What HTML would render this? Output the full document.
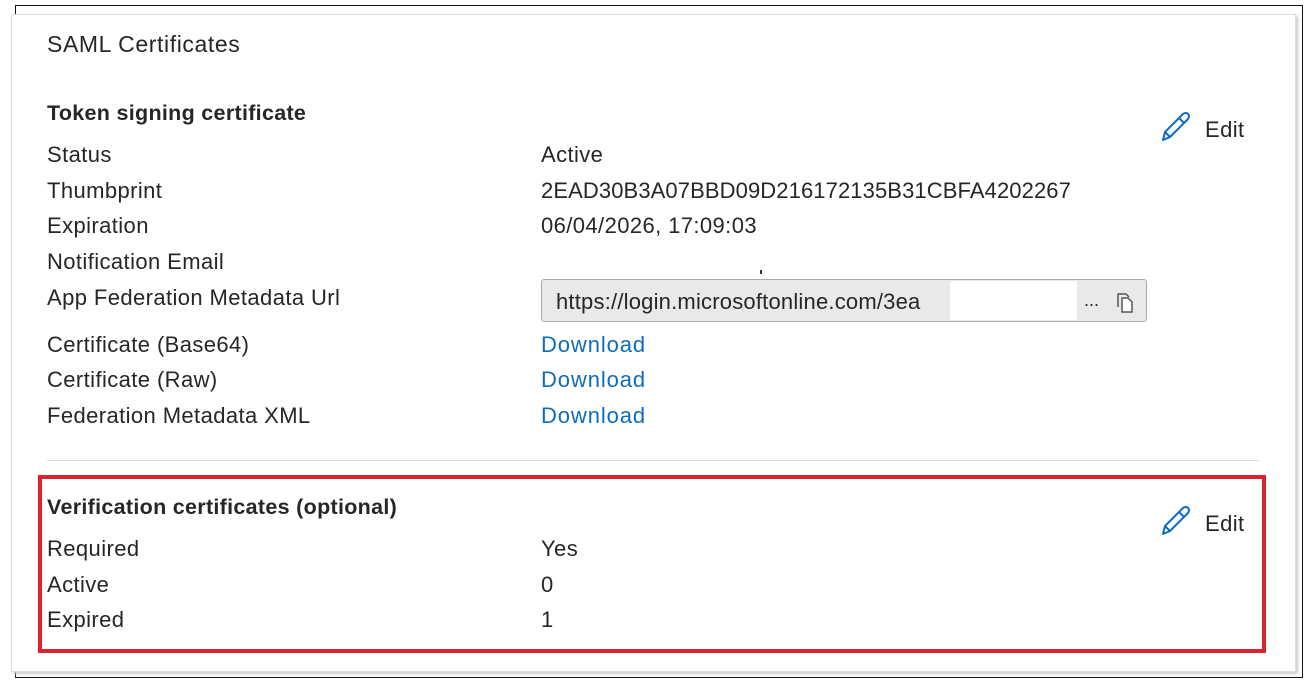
<!DOCTYPE html>
<html><head><style>
body{margin:0;width:1311px;height:689px;background:#fff;position:relative;overflow:hidden;font-family:"Liberation Sans",sans-serif;color:#262626}
.a{position:absolute;white-space:nowrap}
.t{font-size:22px;line-height:24px;letter-spacing:0.4px}
.b{font-weight:bold;font-size:21.5px;letter-spacing:0.3px}
.l{color:#0f6cbd;letter-spacing:0.9px}
</style></head><body>
<div class="a" style="left:15px;top:5px;width:1288px;height:673px;border:1px solid #111;box-sizing:border-box"></div>
<div class="a" style="left:11px;top:14px;width:1285px;height:658px;border:1px solid #ddd;box-shadow:2px 2px 3px #ccc;box-sizing:border-box;background:#fff"></div>
<div class="a t" style="left:47px;top:32px;font-size:23px;letter-spacing:0.6px">SAML Certificates</div>
<div class="a t b" style="left:47px;top:101px">Token signing certificate</div>
<div class="a t" style="left:47px;top:143px">Status</div><div class="a t" style="left:541px;top:143px">Active</div>
<div class="a t" style="left:47px;top:179px">Thumbprint</div><div class="a t" style="left:541px;top:179px;letter-spacing:0.1px">2EAD30B3A07BBD09D216172135B31CBFA4202267</div>
<div class="a t" style="left:47px;top:214px">Expiration</div><div class="a t" style="left:541px;top:214px">06/04/2026, 17:09:03</div>
<div class="a t" style="left:47px;top:250px">Notification Email</div>
<div class="a" style="left:760px;top:270px;width:2px;height:4px;background:#333"></div>
<div class="a t" style="left:47px;top:286px">App Federation Metadata Url</div>
<div class="a" style="left:541px;top:279px;width:606px;height:43px;border:1px solid #aaa;border-radius:3px;background:#e9e9e9;box-sizing:border-box"></div>
<div class="a" style="left:950px;top:281px;width:127px;height:39px;background:#fff"></div>
<div class="a t" style="left:556px;top:290px;letter-spacing:0.2px">https://login.microsoftonline.com/3ea</div>
<div class="a" style="left:1084px;top:290px;font-size:18px">...</div>
<svg class="a" style="left:1114px;top:290px" width="22" height="24" viewBox="0 0 22 24"><path d="M4 17V4h8l3 3" fill="none" stroke="#555" stroke-width="1.5"/><path d="M8 8h6l4 4v10H8z" fill="#fff" stroke="#555" stroke-width="1.5"/></svg>
<div class="a t" style="left:47px;top:333px">Certificate (Base64)</div><div class="a t l" style="left:541px;top:333px">Download</div>
<div class="a t" style="left:47px;top:368px">Certificate (Raw)</div><div class="a t l" style="left:541px;top:368px">Download</div>
<div class="a t" style="left:47px;top:404px">Federation Metadata XML</div><div class="a t l" style="left:541px;top:404px">Download</div>
<div class="a" style="left:47px;top:460px;width:1212px;height:1px;background:#ddd"></div>
<div class="a" style="left:38px;top:475px;width:1228px;height:178px;border:4px solid #d9232d;box-sizing:border-box"></div>
<div class="a t b" style="left:47px;top:495px">Verification certificates (optional)</div>
<div class="a t" style="left:47px;top:537px">Required</div><div class="a t" style="left:541px;top:537px">Yes</div>
<div class="a t" style="left:47px;top:573px">Active</div><div class="a t" style="left:541px;top:573px">0</div>
<div class="a t" style="left:47px;top:608px">Expired</div><div class="a t" style="left:541px;top:608px">1</div>
<svg class="a" style="left:1161px;top:112px" width="32" height="30" viewBox="0 0 32 30"><path d="M2 28l2-8L22 2q3-2 5 0t0 5L9 25z M18 6l5 5 M4 20l5 5" fill="none" stroke="#0f6cbd" stroke-width="2" stroke-linejoin="round"/></svg>
<div class="a t" style="left:1205px;top:118px">Edit</div>
<svg class="a" style="left:1161px;top:506px" width="32" height="30" viewBox="0 0 32 30"><path d="M2 28l2-8L22 2q3-2 5 0t0 5L9 25z M18 6l5 5 M4 20l5 5" fill="none" stroke="#0f6cbd" stroke-width="2" stroke-linejoin="round"/></svg>
<div class="a t" style="left:1205px;top:512px">Edit</div>
</body></html>
